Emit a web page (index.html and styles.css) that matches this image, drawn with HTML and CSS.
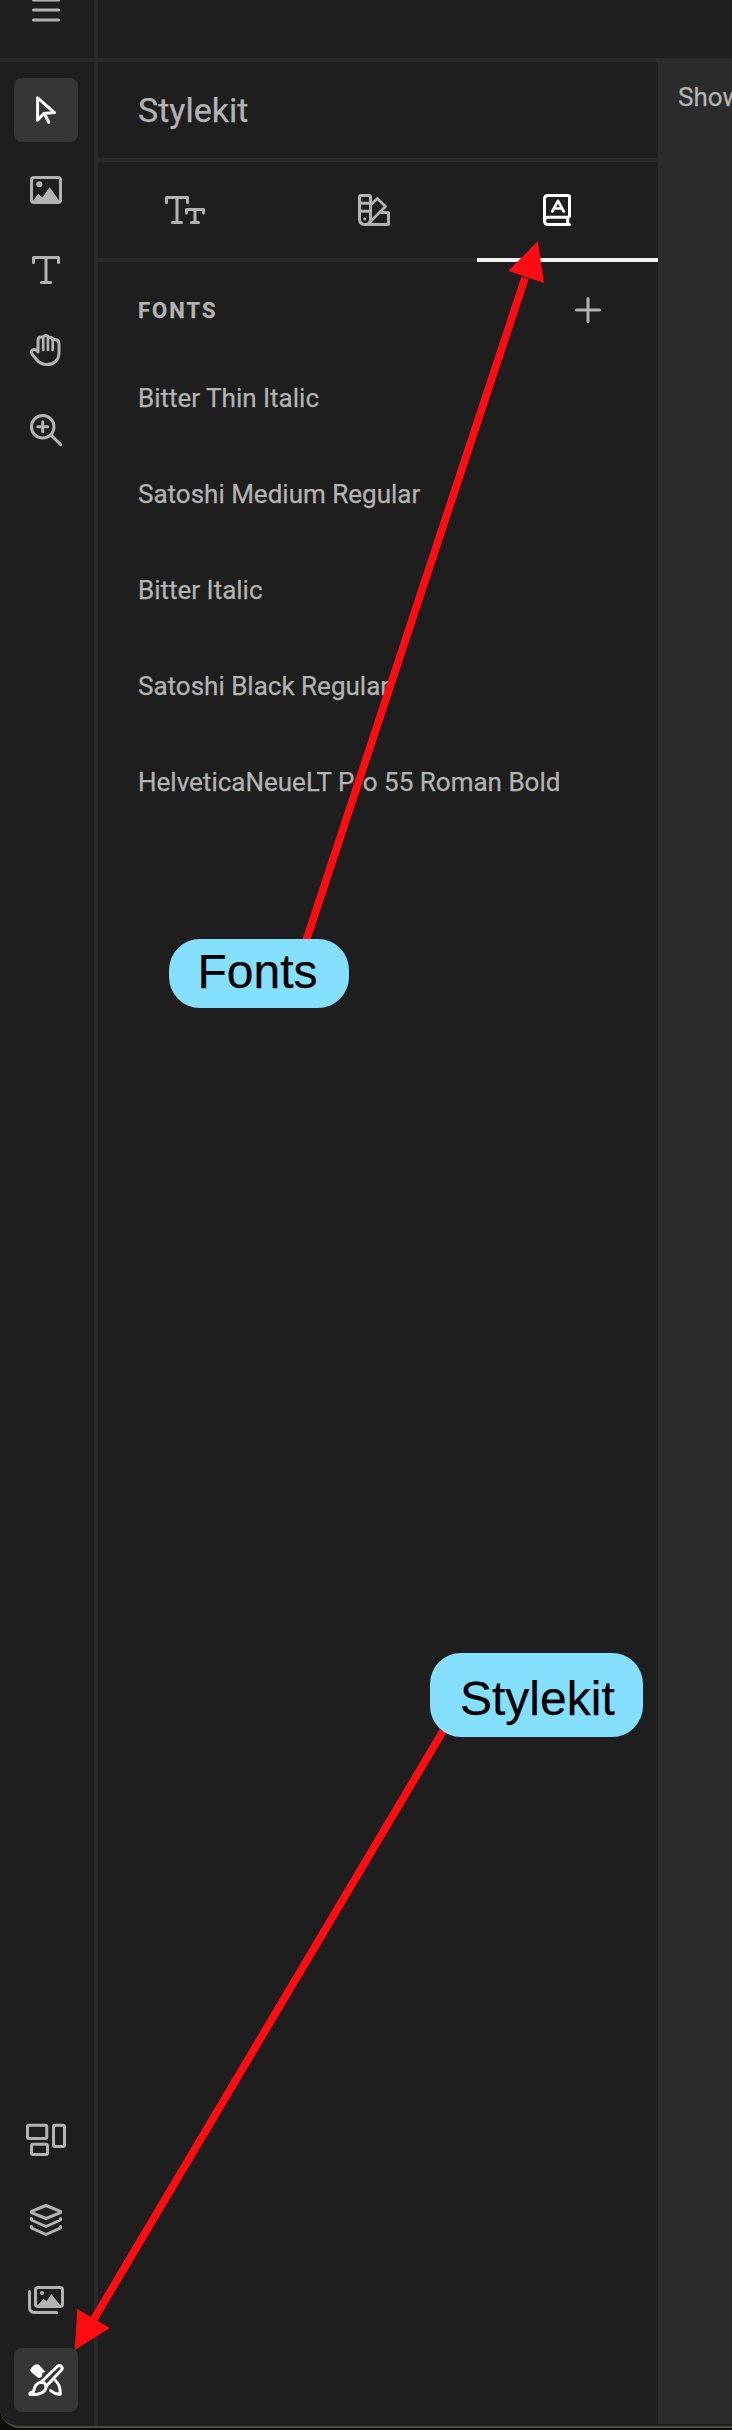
FILE: index.html
```html
<!DOCTYPE html>
<html lang="en">
<head>
<meta charset="utf-8">
<title>Stylekit</title>
<link rel="stylesheet" href="styles.css">
</head>
<body>
<div class="window">
  <header class="topbar">
    <button class="menu" aria-label="Menu"><svg class="icon" viewBox="0 0 40 40"><path d="M7.500 10H32.500M7.500 20H32.500M7.500 30H32.500"/></svg></button>
  </header>
  <div class="workspace">
    <nav class="rail">
      <div class="tools">
        <button class="tool active" aria-label="Select"><svg class="icon" viewBox="0 0 40 40"><path d="M11.600 7.800V30.300L17.800 23.600L28.500 22.600Z"/><path d="M18.500 24L22.800 32.300"/></svg></button>
        <button class="tool" aria-label="Image"><svg class="icon" viewBox="0 0 40 40"><rect x="5.500" y="7.500" width="29" height="25" rx="2.500"/><circle class="solid" cx="13.300" cy="14.300" r="3"/><path class="solid" d="M6 32L12.300 23.700L16.300 27.500L23.700 17.300L34 32Z"/></svg></button>
        <button class="tool" aria-label="Text"><svg class="icon" viewBox="0 0 40 40"><path d="M7.500 12.500V7.500H32.500V12.500M20 7.500V32.500M15.500 32.500H24.500"/></svg></button>
        <button class="tool" aria-label="Hand"><svg class="icon" viewBox="0 0 40 40"><path d="M12 22V10.500Q12 7 15 7H17.300Q19 4.800 21.500 6L22.300 7.500Q26 6.500 27 9.800Q33 8.500 33 14V22.500C33 30 28 34.500 21 34.500C15.500 34.500 12.500 32 10.500 29.500L6.300 24.500C3.500 20.500 7.500 17.500 12 21.500"/><path class="thin" d="M17.200 8V20M21.900 8V20M26.700 10V20"/></svg></button>
        <button class="tool" aria-label="Zoom"><svg class="icon" viewBox="0 0 40 40"><circle cx="16.700" cy="16.700" r="11.300"/><path d="M11.800 16.700H21.800M16.700 11.700V21.700M25.500 25.500L34.800 34.800"/></svg></button>
      </div>
      <div class="tools">
        <button class="tool" aria-label="Components"><svg class="icon wide" viewBox="0 0 44 40"><rect x="3.500" y="5.200" width="19.300" height="13.300" rx="1.500"/><rect x="29.500" y="5.200" width="11" height="21.300" rx="1.500"/><rect x="7.500" y="24.200" width="16" height="10.300" rx="1.500"/></svg></button>
        <button class="tool" aria-label="Layers"><svg class="icon" viewBox="0 0 40 40"><path d="M20 5.500L34.500 11.300V12.700L20 18.500L5.500 12.700V11.300ZM5.500 18.500V20L20 26.500L34.500 20V18.500M5.500 26.500V28L20 34.500L34.500 28V26.500"/></svg></button>
        <button class="tool" aria-label="Library"><svg class="icon" viewBox="0 0 40 40"><rect x="9.500" y="7.500" width="27" height="19" rx="2.500"/><circle class="solid" cx="16" cy="13" r="2"/><path class="solid" d="M11 26L17.700 18.800L20.500 21.500L25.300 14L34.800 26Z"/><path d="M3.500 11.500V27Q3.500 32.600 9 32.600H30.500"/></svg></button>
        <button class="tool active" aria-label="Stylekit"><svg class="icon" viewBox="0 0 40 40"><path class="solid" d="M5 8.200Q9 3 13 4.800L19.300 11.700L16.300 13.200L15.800 16.700L12.700 18.300L5 12Q3.500 10 5 8.200Z"/><path d="M15 22.300L31.200 6.500C34.500 4 38 7.500 35 10.500L20 26.500"/><path d="M15 22.300C19 22.300 21 25 19.800 28.500C18 33.500 12 35 4 34.500Q3 32.500 7.500 31.700C8.500 28 9 23 15 22.300Z"/><path d="M29.500 20.500Q34.500 25 34.300 34.300Q29 34.500 24.500 30.500"/></svg></button>
      </div>
    </nav>
    <section class="panel">
      <h1 class="panel-title">Stylekit</h1>
      <div class="tabs">
        <button class="tab" aria-label="Text styles"><svg class="icon wide" viewBox="0 0 44 40"><path d="M3.500 12.500V7.500H24.500V12.500M14 7.500V32.500M9.500 32.500H18.500M23.500 23V19.500H40.500V23M32 19.500V32.500M28.500 32.500H35.500"/></svg></button>
        <button class="tab palette" aria-label="Colors"><svg class="icon" viewBox="0 0 40 40"><path d="M5.500 29V7Q5.500 5.500 7 5.500H15Q16.500 5.500 16.500 7V29Q16.500 34.500 11 34.500Q5.500 34.500 5.500 29ZM5.500 13.300H16.500M5.500 21.300H16.500"/><path class="thin" d="M17 14.700L23.300 8.500L31.500 16.500L15 33"/><path d="M27.500 22.500H33.500Q34.500 22.500 34.500 23.500V33.500Q34.500 34.500 33.500 34.500H11"/><circle class="solid" cx="10.800" cy="29" r="1.500"/></svg></button>
        <button class="tab current" aria-label="Fonts"><svg class="icon" viewBox="0 0 40 40"><path d="M7.500 31V9Q7.500 5.500 11 5.500H31Q32.500 5.500 32.500 7V26Q32.500 27.300 31 27.300H11Q7.500 27.300 7.500 31Q7.500 34.500 11 34.500H32.500M30.700 28V34"/><path class="thin" d="M15.300 21.500L21 10.800L26.700 21.500M17.500 18.500H24.500"/></svg></button>
      </div>
      <div class="section-head">
        <h2 class="section-title">FONTS</h2>
        <button class="add" aria-label="Add font"><svg class="icon" viewBox="0 0 40 40"><path d="M20 8.500V31.500M8.500 20H31.500"/></svg></button>
      </div>
      <ul class="fonts">
        <li class="font">Bitter Thin Italic</li>
        <li class="font">Satoshi Medium Regular</li>
        <li class="font">Bitter Italic</li>
        <li class="font">Satoshi Black Regular</li>
        <li class="font">HelveticaNeueLT Pro 55 Roman Bold</li>
      </ul>
    </section>
    <main class="canvas">Show</main>
  </div>
</div>
<svg class="arrows" viewBox="0 0 732 2430">
  <path class="shaft" d="M525 278L306 941M443 1731L94 2319"/>
  <path class="head" d="M537.700 241.300L508.300 271L544 283ZM74.700 2350L77.300 2309L109.700 2328Z"/>
</svg>
<div class="callout callout-fonts">Fonts</div>
<div class="callout callout-kit">Stylekit</div>
</body>
</html>
```
FILE: styles.css
```css
* { box-sizing: border-box; }
body {
  position: relative;
  width: 732px;
  height: 2430px;
  margin: 0;
  overflow: hidden;
  background: #0c0c08;
  color: #b3b3b3;
  font-family: Roboto, "Liberation Sans", sans-serif;
  -webkit-text-stroke: 0.25px currentColor;
}
button {
  display: flex;
  align-items: center;
  justify-content: center;
  padding: 0;
  border: 0;
  background: none;
  color: inherit;
}
.window {
  display: flex;
  flex-direction: column;
  height: 2428px;
  overflow: hidden;
  border-bottom: 2px solid #4b4b4b;
  border-bottom-left-radius: 20px;
  background: #1e1e1e;
}
.topbar {
  flex: none;
  height: 62px;
  border-bottom: 4px solid #2a2a2a;
}
.menu {
  align-items: flex-start;
  width: 98px;
  height: 58px;
  padding-right: 6px;
  border-right: 4px solid #2a2a2a;
}
.menu .icon { margin-top: -10px; margin-left: 4px; }
.workspace { display: flex; flex: 1; }
.rail {
  display: flex;
  flex-direction: column;
  justify-content: space-between;
  width: 98px;
  padding: 16px 16px 14px 14px;
  border-right: 4px solid #2a2a2a;
}
.tools { display: flex; flex-direction: column; gap: 16px; }
.tool { width: 64px; height: 64px; border-radius: 8px; }
.tool.active { background: #363636; color: #fff; }
.icon {
  flex: none;
  width: 40px;
  height: 40px;
  fill: none;
  stroke: currentColor;
  stroke-width: 3;
  stroke-linecap: round;
  stroke-linejoin: round;
}
.icon.wide { width: 44px; }
.icon .thin { stroke-width: 2.700; }
.icon .solid { fill: currentColor; stroke: none; }
.panel { width: 560px; }
.panel-title {
  height: 100px;
  margin: 0;
  padding-left: 40px;
  border-bottom: 4px solid #2a2a2a;
  font-size: 34px;
  font-weight: 400;
  line-height: 96px;
}
.tabs {
  display: grid;
  grid-template-columns: 174px 205px 181px;
  height: 100px;
}
.tab { border-bottom: 4px solid #2a2a2a; }
.tab.palette { padding-right: 1px; }
.tab.current { padding-right: 21px; border-color: #f3f1f2; color: #fff; }
.section-head {
  display: flex;
  align-items: center;
  justify-content: space-between;
  height: 96px;
  padding: 0 50px 0 40px;
}
.section-title {
  margin: 0;
  font-size: 22px;
  font-weight: 700;
  letter-spacing: 2px;
}
.fonts { margin: -8px 0 0; padding: 0 0 0 40px; list-style: none; }
.font { height: 96px; font-size: 26px; line-height: 96px; white-space: nowrap; }
.canvas {
  flex: 1;
  min-width: 0;
  margin-bottom: 2px;
  padding: 20px 0 0 20px;
  overflow: hidden;
  background: #2b2b2b;
  font-size: 26px;
  line-height: 30px;
}
.arrows { position: absolute; inset: 0; width: 732px; height: 2430px; }
.shaft { fill: none; stroke: #ff0b12; stroke-width: 7.700; }
.head { fill: #ff0b12; }
.callout {
  position: absolute;
  border-radius: 31px;
  background: #85e0ff;
  color: #000;
  font-family: "Liberation Sans", sans-serif;
  font-size: 48px;
}
.callout-fonts { left: 169px; top: 938.5px; width: 179.5px; height: 69.5px; padding-left: 28.5px; line-height: 66px; }
.callout-kit { left: 430px; top: 1652.500px; width: 213px; height: 84.500px; padding-left: 30px; line-height: 91px; }
```
